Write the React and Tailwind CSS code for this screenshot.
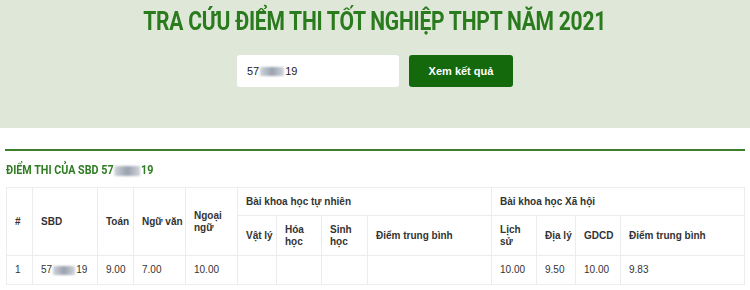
const Blur = ({ w = 26, h = 9 }) => (
  <span
    className="inline-block bg-gradient-to-r from-gray-300 via-gray-400 to-gray-300 blur-[1px] align-middle mx-[1px]"
    style={{ width: w, height: h }}
  />
);

const Masked = ({ w, h }) => (
  <span className="whitespace-nowrap">
    57<Blur w={w} h={h} />19
  </span>
);

const th = "border border-[#ececec] pl-2 pr-0 text-left align-middle font-bold";
const td = "border border-[#ececec] pl-2 pr-0 text-left align-middle";

export default function App() {
  return (
    <div className="w-[750px] h-[290px] overflow-hidden bg-white font-['Liberation_Sans',Arial,sans-serif]">
      {/* search band */}
      <div className="h-[128px] bg-[#dfe7d9] flex flex-col items-center">
        <h1 className="mt-[6px] whitespace-nowrap text-[26px] leading-[30px] font-bold text-[#2a7a1e] font-['Roboto',sans-serif] tracking-[-0.3px] scale-x-[0.81]">
          TRA CỨU ĐIỂM THI TỐT NGHIỆP THPT NĂM 2021
        </h1>
        <div className="mt-[19px] flex gap-[10px]">
          <div className="w-[162px] h-[32px] bg-white rounded-[3px] flex items-center pl-[10px] text-[11px] text-[#222]">
            <Masked w={24} h={9} />
          </div>
          <button className="w-[104px] h-[32px] bg-[#14690d] rounded-[3px] text-white text-[11px] font-bold">
            Xem kết quả
          </button>
        </div>
      </div>

      {/* results */}
      <div className="px-[5px] pt-[21px]">
        <div className="h-[2px] bg-[#3d7f2c]" />
        <div className="mt-[6px] pl-[1px] h-[16px]">
          <h2 className="inline-block whitespace-nowrap origin-left scale-x-[0.86] text-[12.5px] leading-[16px] font-bold text-[#2f7d22] font-['Roboto',sans-serif]">
            ĐIỂM THI CỦA SBD <Masked w={30} h={10} />
          </h2>
        </div>
        <table className="mt-[14px] ml-[1px] w-[738px] border-collapse table-fixed text-[10px] leading-[12px] text-[#333]">
          <colgroup>
            <col className="w-[26px]" />
            <col className="w-[65px]" />
            <col className="w-[36px]" />
            <col className="w-[52px]" />
            <col className="w-[52px]" />
            <col className="w-[39px]" />
            <col className="w-[45px]" />
            <col className="w-[46px]" />
            <col className="w-[124px]" />
            <col className="w-[45px]" />
            <col className="w-[39px]" />
            <col className="w-[45px]" />
            <col className="w-[124px]" />
          </colgroup>
          <thead>
            <tr className="h-[28px]">
              <th rowSpan={2} className={th}>#</th>
              <th rowSpan={2} className={th}>SBD</th>
              <th rowSpan={2} className={th}>Toán</th>
              <th rowSpan={2} className={th}>Ngữ văn</th>
              <th rowSpan={2} className={th}>Ngoại<br />ngữ</th>
              <th colSpan={4} className={th}>Bài khoa học tự nhiên</th>
              <th colSpan={4} className={th}>Bài khoa học Xã hội</th>
            </tr>
            <tr className="h-[40px]">
              <th className={th}>Vật lý</th>
              <th className={th}>Hóa<br />học</th>
              <th className={th}>Sinh<br />học</th>
              <th className={th}>Điểm trung bình</th>
              <th className={th}>Lịch<br />sử</th>
              <th className={th}>Địa lý</th>
              <th className={th}>GDCD</th>
              <th className={th}>Điểm trung bình</th>
            </tr>
          </thead>
          <tbody>
            <tr className="h-[29px]">
              <td className={td}>1</td>
              <td className={td}><Masked w={22} h={9} /></td>
              <td className={td}>9.00</td>
              <td className={td}>7.00</td>
              <td className={td}>10.00</td>
              <td className={td}></td>
              <td className={td}></td>
              <td className={td}></td>
              <td className={td}></td>
              <td className={td}>10.00</td>
              <td className={td}>9.50</td>
              <td className={td}>10.00</td>
              <td className={td}>9.83</td>
            </tr>
          </tbody>
        </table>
      </div>
    </div>
  );
}
